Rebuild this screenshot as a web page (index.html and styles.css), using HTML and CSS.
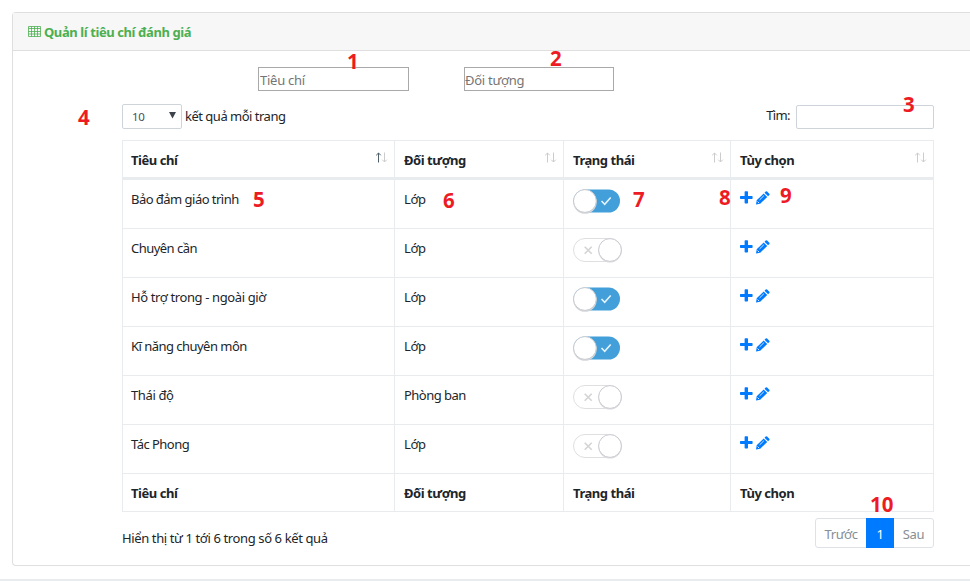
FILE: index.html
```
<!DOCTYPE html>
<html lang="vi">
<head>
<meta charset="utf-8">
<title>Quản lí tiêu chí đánh giá</title>
<link rel="stylesheet" href="styles.css">
</head>
<body>
<svg class="defs" width="0" height="0">
  <symbol id="on" viewBox="0 0 50 28">
    <rect x=".5" y=".5" width="46.5" height="23" rx="11.5" fill="#439fd9"/>
    <path d="M28.500 12l3.200 3.300 6-6.800" fill="none" stroke="#e3f3fc" stroke-width="1.6"/>
    <circle cx="12" cy="13.2" r="11.6" fill="#d5d6da"/>
    <circle cx="11.9" cy="12" r="11.4" fill="#fff" stroke="#c6c9ce"/>
  </symbol>
  <symbol id="off" viewBox="0 0 50 28">
    <rect x=".5" y=".5" width="48" height="23" rx="11.5" fill="#fff" stroke="#dfdfe2"/>
    <path d="M11.7 8.700l7 7m0-7l-7 7" fill="none" stroke="#d4d4d4" stroke-width="1.6"/>
    <circle cx="37" cy="13" r="11.6" fill="#dddde1"/>
    <circle cx="37" cy="12" r="11.4" fill="#fff" stroke="#c9cad1"/>
  </symbol>
  <symbol id="plus" viewBox="0 0 13 13">
    <path d="M4.600 1q0-.7.7-.7h2q.7 0 .7.7v3.900h3.900q.7 0 .7.7v1.600q0 .7-.7.7H8v3.900q0 .7-.7.7h-2q-.7 0-.7-.7V7.900H.7q-.7 0-.7-.7V5.600q0-.7.7-.7h3.900z" fill="#007bff"/>
  </symbol>
  <symbol id="pencil" viewBox="0 0 14 14">
    <path d="M0 13.500l.7-4.200 7-6.800 3.500 3.500-7 6.800zM8.500 1.700L9.700.6q.7-.6 1.400 0l2.200 2.100q.6.700 0 1.400l-1.200 1.200z" fill="#007bff"/>
    <path d="M3.500 9l4.400-4.300M1.500 10.500l1.600 1.600" fill="none" stroke="#fff" stroke-width=".8"/>
  </symbol>
  <symbol id="sort" viewBox="0 0 12 11">
    <path d="M2.500 10.500V1M.2 3.300L2.500 1l2.300 2.300" fill="none"/>
    <path d="M8.500 .5V10M6.200 7.700L8.500 10l2.300-2.300" fill="none" stroke="#ccc"/>
  </symbol>
</svg>
<main class="page">
  <section class="card">
    <header class="card-head">
      <svg class="grid-icon" viewBox="0 0 13 11"><path d="M.5 .5h12v10H.5zM.5 2.500h12M.5 5.500h12M.5 8h12M3.500 .5v10M6.500 .5v10M9.500 .5v10" fill="none" stroke="#4caf50" stroke-width=".8"/></svg>
      <h1>Quản lí tiêu chí đánh giá</h1>
    </header>
    <div class="content">
      <div class="filters">
        <input type="text" class="filter" placeholder="Tiêu chí">
        <input type="text" class="filter second" placeholder="Đối tượng">
      </div>
      <div class="tools">
        <div class="length"><div class="select"><span>10</span><svg width="7" height="7"><path d="M0 0h7L3.500 6.500z" fill="#3c434a"/></svg></div><span class="length-text">kết quả mỗi trang</span></div>
        <label class="search"><span>Tìm:</span><input type="text"></label>
      </div>
      <table>
        <colgroup><col class="c1"><col class="c2"><col class="c3"><col class="c4"></colgroup>
        <thead><tr>
          <th><div class="th"><span>Tiêu chí</span><svg class="sort active"><use href="#sort"/></svg></div></th>
          <th><div class="th"><span>Đối tượng</span><svg class="sort"><use href="#sort"/></svg></div></th>
          <th><div class="th"><span>Trạng thái</span><svg class="sort"><use href="#sort"/></svg></div></th>
          <th><div class="th"><span>Tùy chọn</span><svg class="sort"><use href="#sort"/></svg></div></th>
        </tr></thead>
        <tbody>
          <tr><td class="tight">Bảo đảm giáo trình</td><td>Lớp</td><td><svg class="toggle"><use href="#on"/></svg></td><td><div class="acts"><svg class="plus"><use href="#plus"/></svg><svg class="pencil"><use href="#pencil"/></svg></div></td></tr>
          <tr><td class="tight">Chuyên cần</td><td>Lớp</td><td><svg class="toggle"><use href="#off"/></svg></td><td><div class="acts"><svg class="plus"><use href="#plus"/></svg><svg class="pencil"><use href="#pencil"/></svg></div></td></tr>
          <tr><td>Hỗ trợ trong - ngoài giờ</td><td>Lớp</td><td><svg class="toggle"><use href="#on"/></svg></td><td><div class="acts"><svg class="plus"><use href="#plus"/></svg><svg class="pencil"><use href="#pencil"/></svg></div></td></tr>
          <tr><td class="tight">Kĩ năng chuyên môn</td><td>Lớp</td><td><svg class="toggle"><use href="#on"/></svg></td><td><div class="acts"><svg class="plus"><use href="#plus"/></svg><svg class="pencil"><use href="#pencil"/></svg></div></td></tr>
          <tr><td>Thái độ</td><td class="tight">Phòng ban</td><td><svg class="toggle"><use href="#off"/></svg></td><td><div class="acts"><svg class="plus"><use href="#plus"/></svg><svg class="pencil"><use href="#pencil"/></svg></div></td></tr>
          <tr><td class="tight">Tác Phong</td><td>Lớp</td><td><svg class="toggle"><use href="#off"/></svg></td><td><div class="acts"><svg class="plus"><use href="#plus"/></svg><svg class="pencil"><use href="#pencil"/></svg></div></td></tr>
        </tbody>
        <tfoot><tr><th>Tiêu chí</th><th>Đối tượng</th><th>Trạng thái</th><th>Tùy chọn</th></tr></tfoot>
      </table>
      <div class="bottom">
        <span class="info">Hiển thị từ 1 tới 6 trong số 6 kết quả</span>
        <nav class="pager"><span class="prev">Trước</span><span class="current">1</span><span class="next">Sau</span></nav>
      </div>
    </div>
  </section>
  <div class="strip"></div>
  <b class="mark m1">1</b><b class="mark m2">2</b><b class="mark m3">3</b><b class="mark m4">4</b><b class="mark m5">5</b><b class="mark m6">6</b><b class="mark m7">7</b><b class="mark m8">8</b><b class="mark m9">9</b><b class="mark m10">10</b>
</main>
</body>
</html>
```
FILE: styles.css
```
* { box-sizing: border-box; }
body {
  margin: 0;
  background: #fff;
  color: #212529;
  font: 13px/20px "Noto Sans", "Open Sans", sans-serif;
  letter-spacing: -0.38px;
}
.defs { position: absolute; }
svg { display: block; flex: none; }
.page { position: relative; height: 581px; overflow: hidden; padding: 12px 0 0 12px; }
.card {
  height: 554px;
  border: 1px solid #dfdfdf;
  border-right: 0;
  border-radius: 4px 0 0 4px;
}
.card-head {
  display: flex;
  align-items: center;
  gap: 3px;
  height: 38px;
  padding: 1px 0 0 15px;
  background: #f7f7f7;
  border-bottom: 1px solid #dfdfdf;
}
.grid-icon { width: 13px; height: 11px; margin-top: -1px; }
h1 { margin: 0; font-size: 13px; line-height: 20px; color: #4caf50; letter-spacing: -0.41px; }
.content { width: 812px; margin-left: 109px; padding-top: 16px; }
input { font: inherit; letter-spacing: -0.25px; outline: 0; background: #fff; }
input::placeholder { color: #757575; opacity: 1; }
.filters { display: flex; gap: 55px; padding-left: 136px; }
.filter { width: 151px; height: 24px; padding: 2px 1px 0; border: 1px solid #a9a9a9; }
.filter.second { width: 150px; padding-left: 0; }
.tools { display: flex; justify-content: space-between; margin-top: 13px; height: 25px; }
.length { display: flex; gap: 4px; align-items: center; }
.length-text { margin: -2px 0 0 -1px; letter-spacing: -0.5px; }
.select {
  display: flex;
  justify-content: space-between;
  align-items: center;
  width: 60px;
  height: 25px;
  padding: 0 5px 0 9px;
  border: 1px solid #ced4da;
  border-radius: 2px;
  font-size: 11.5px;
  color: #495057;
}
.select svg { margin-top: -3px; }
.search { display: flex; gap: 6px; align-items: center; }
.search span { margin-top: -3px; letter-spacing: -0.6px; }
.search input { width: 138px; height: 24px; border: 1px solid #ced4da; border-radius: 2px; }
table {
  width: 812px;
  margin-top: 11px;
  table-layout: fixed;
  border-spacing: 0;
  border-top: 1px solid #e9ecef;
  border-left: 1px solid #e9ecef;
}
.c1 { width: 272px; }
.c2 { width: 169px; }
.c3 { width: 167px; }
.c4 { width: 203px; }
th, td {
  padding: 9px 8px 0;
  text-align: left;
  vertical-align: top;
  border-right: 1px solid #e9ecef;
  border-bottom: 1px solid #e9ecef;
}
th { letter-spacing: -0.45px; }
.tight { letter-spacing: -0.53px; }
th:not(:first-child), td:not(:first-child) { padding-left: 9px; }
thead th { height: 39px; border-bottom-width: 3px; padding-right: 6px; }
.th { display: flex; justify-content: space-between; }
.sort { width: 12px; height: 11px; margin-top: 2px; stroke: #ccc; }
.sort.active { stroke: #50606b; }
tbody td { height: 49px; }
tfoot th { height: 38px; }
.toggle { width: 50px; height: 28px; }
.acts { display: flex; gap: 3px; padding-top: 2px; }
.plus { width: 13px; height: 13px; }
.pencil { width: 14px; height: 14px; }
.bottom { display: flex; justify-content: space-between; padding-top: 6px; }
.info { padding-top: 10px; }
.pager { display: flex; width: 119px; height: 30px; border: 1px solid #dee2e6; border-radius: 3px; color: #868e96; line-height: 31px; text-align: center; }
.prev { width: 50px; }
.current { width: 28px; height: 30px; margin-top: -1px; padding-top: 1px; background: #007bff; color: #fff; }
.next { flex: 1; }
.strip { height: 2px; margin: 13px 0 0 -12px; background: #e9ecef; }
.mark {
  position: absolute;
  font: bold 20.5px/24px "Open Sans", sans-serif;
  letter-spacing: 0;
  color: #ed1c24;
}
.m1 { left: 347px; top: 49px; }
.m2 { left: 550px; top: 46px; }
.m3 { left: 903px; top: 92px; }
.m4 { left: 78px; top: 105px; }
.m5 { left: 253px; top: 187px; }
.m6 { left: 443px; top: 188px; }
.m7 { left: 633px; top: 187px; }
.m8 { left: 719px; top: 185px; }
.m9 { left: 780px; top: 183px; }
.m10 { left: 870px; top: 492px; }
```
